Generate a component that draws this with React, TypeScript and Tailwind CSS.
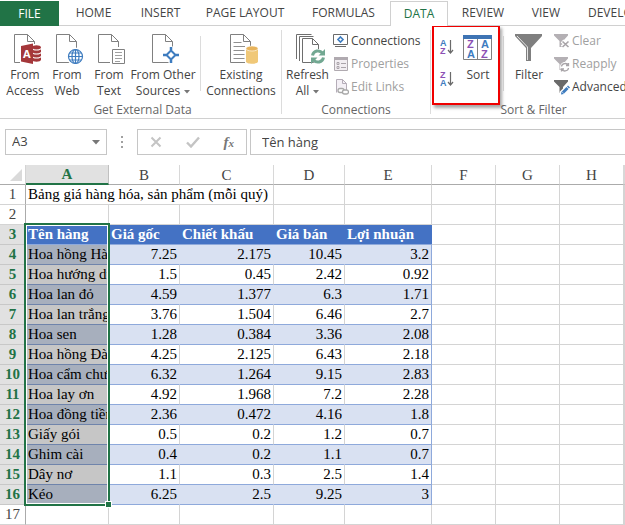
import type { ReactNode } from "react";

const tabs = [
  { label: "FILE", className: "w-[59px] bg-[#217346] text-white" },
  { label: "HOME", className: "w-[69px] text-[#444]" },
  { label: "INSERT", className: "w-[65px] text-[#444]" },
  { label: "PAGE LAYOUT", className: "w-[104px] text-[#444]" },
  { label: "FORMULAS", className: "w-[93px] text-[#444]" },
  { label: "DATA", className: "w-[58px] text-[#217346]" },
  { label: "REVIEW", className: "w-[70px] text-[#444]" },
  { label: "VIEW", className: "w-[56px] text-[#444]" },
  { label: "DEVELOPER", className: "w-[94px] text-[#444]" },
];

const columns = ["A", "B", "C", "D", "E", "F", "G", "H", "I"];

const headings = ["Tên hàng", "Giá gốc", "Chiết khấu", "Giá bán", "Lợi nhuận"];

const products = [
  ["Hoa hồng Hà Nội", "7.25", "2.175", "10.45", "3.2"],
  ["Hoa hướng dương", "1.5", "0.45", "2.42", "0.92"],
  ["Hoa lan đỏ", "4.59", "1.377", "6.3", "1.71"],
  ["Hoa lan trắng", "3.76", "1.504", "6.46", "2.7"],
  ["Hoa sen", "1.28", "0.384", "3.36", "2.08"],
  ["Hoa hồng Đà Lạt", "4.25", "2.125", "6.43", "2.18"],
  ["Hoa cẩm chướng", "6.32", "1.264", "9.15", "2.83"],
  ["Hoa lay ơn", "4.92", "1.968", "7.2", "2.28"],
  ["Hoa đồng tiền", "2.36", "0.472", "4.16", "1.8"],
  ["Giấy gói", "0.5", "0.2", "1.2", "0.7"],
  ["Ghim cài", "0.4", "0.2", "1.1", "0.7"],
  ["Dây nơ", "1.1", "0.3", "2.5", "1.4"],
  ["Kéo", "6.25", "2.5", "9.25", "3"],
];

/* Icons */

function PageIcon({ children }: { children?: ReactNode }) {
  return (
    <svg viewBox="0 0 32 32" className="size-8 overflow-visible" fill="none">
      <path d="M5.5 28.5V.5h13l7 7v21z" fill="#fff" stroke="#808080" />
      <path d="M18.5.5v7h7" stroke="#808080" />
      {children}
    </svg>
  );
}

function AccessIcon() {
  return (
    <PageIcon>
      <path d="M11 10h22v20H11z" fill="#fff" />
      <path d="M23 13.500c0-3 9-3 9 0v12c0 3-9 3-9 0z" fill="#a4373a" />
      <path
        d="M23 14.500c1 2 8 2 9 0M23 18.500c1 2 8 2 9 0M23 22.500c1 2 8 2 9 0"
        stroke="#fff"
        strokeWidth="1.200"
      />
      <path d="M12 12l12-2.500v20.500l-12-2.500z" fill="#a4373a" />
      <text x="14" y="24" fontSize="11" fontWeight="700" fill="#fff" className="font-['Open_Sans',sans-serif]">
        A
      </text>
    </PageIcon>
  );
}

function WebIcon() {
  return (
    <PageIcon>
      <circle cx="24.5" cy="22.500" r="9" fill="#fff" />
      <g stroke="#3e7cbf" strokeWidth="1.200">
        <circle cx="24.5" cy="22.500" r="7" fill="#fff" />
        <ellipse cx="24.5" cy="22.500" rx="3.500" ry="7" />
        <path d="M24.5 15.500v14M17.500 22.500h14M18.500 19h12M18.500 26h12" />
      </g>
    </PageIcon>
  );
}

function TextIcon() {
  return (
    <PageIcon>
      <path d="M17 13h16v18H17z" fill="#fff" />
      <path d="M19.500 15.500h12v14h-12z" fill="#fff" stroke="#808080" />
      <path d="M22 18.500h7M22 21.500h7M22 24.500h7M22 27.500h5" stroke="#a0a0a0" />
    </PageIcon>
  );
}

function OtherSourcesIcon() {
  return (
    <PageIcon>
      <path d="M24 11l10 10-10 10-10-10z" fill="#fff" />
      <path d="M24 16.500l4.500 4.500-4.500 4.500-4.500-4.500z" fill="#fff" stroke="#3e7cbf" strokeWidth="2" />
      <path d="M24 13v3M24 26v3M16 21h3.500M28.500 21H32" stroke="#3e7cbf" strokeWidth="2.500" />
    </PageIcon>
  );
}

function ExistingIcon() {
  return (
    <PageIcon>
      <path d="M8.500 8.500h8M8.500 12.500h14M8.500 16.500h11M8.500 20.500h11M8.500 24.500h11" stroke="#909090" />
      <path d="M20 12h14v18H20z" fill="#fff" />
      <path d="M21 14.500v13c0 3 12 3 12 0v-13z" fill="#f0c878" />
      <ellipse cx="27" cy="14.500" rx="6" ry="2.500" fill="#e8b45c" stroke="#fff" strokeWidth=".6" />
    </PageIcon>
  );
}

function RefreshIcon() {
  return (
    <svg viewBox="0 0 32 32" className="size-8 overflow-visible" fill="none">
      <g stroke="#6e6e6e">
        <path d="M4.500 25V.5h15M7.500 27V2.500h14" />
        <path d="M10.500 28.500v-24h10l6 6v18z" fill="#fff" />
        <path d="M20.500 4.500v6h6" />
      </g>
      <circle cx="26" cy="22.500" r="7.500" fill="#fff" />
      <g stroke="#72a892" strokeWidth="3">
        <path d="M20.500 21.500c1-5 7-6 10-2.500" />
        <path d="M31.500 23.500c-1 5-7 6-10 2.500" />
      </g>
      <path d="M33 15v6.500h-6.500zM19 30v-6.500h6.500z" fill="#72a892" />
    </svg>
  );
}

function ConnectionsIcon() {
  return (
    <svg viewBox="0 0 16 16" className="size-4" fill="none">
      <path d="M.5 1.500h14v10H.5z" fill="#fff" stroke="#6a6a6a" />
      <path d="M2 13.500h11" stroke="#6a6a6a" />
      <path d="M7.500 4L10 6.500 7.500 9 5 6.500z" stroke="#3e7cbf" strokeWidth="1.600" />
    </svg>
  );
}

function PropertiesIcon() {
  return (
    <svg viewBox="0 0 16 16" className="size-4" fill="none">
      <path d="M1.500 1.500h13v13h-13z" fill="#f2eef2" stroke="#b0aab0" />
      <path d="M1 1h14v3H1z" fill="#b0aab0" />
      <path d="M4 6.500h2v2H4zM4 10.500h2v2H4zM8 7.500h5M8 11.500h5" stroke="#aaa4aa" />
    </svg>
  );
}

function EditLinksIcon() {
  return (
    <svg viewBox="0 0 16 16" className="size-4" fill="none">
      <path d="M3.500 13.500V.5h6l4 4v9" fill="#f4f0f6" stroke="#b5adb8" />
      <path d="M9.500.5v4h4" stroke="#b5adb8" />
      <g stroke="#a8a8a8" strokeWidth="1.300" fill="#fff">
        <rect x="5" y="9.500" width="6" height="4" rx="2" />
        <rect x="9.500" y="11" width="6" height="4" rx="2" />
      </g>
    </svg>
  );
}

function SortOrderIcon({ top, bottom }: { top: string; bottom: string }) {
  const color = (letter: string) => (letter === "A" ? "#3e7cbf" : "#8c50b4");
  return (
    <svg viewBox="0 0 14 16" className="h-4 w-[14px] overflow-visible" fill="none">
      <g fontSize="9" fontWeight="700" className="font-['Liberation_Sans',sans-serif]">
        <text x="0" y="7" fill={color(top)}>{top}</text>
        <text x="0" y="15" fill={color(bottom)}>{bottom}</text>
      </g>
      <path d="M10.500 1v13M8 11l2.500 3 2.500-3" stroke="#6a6a6a" strokeWidth="1.200" />
    </svg>
  );
}

function SortIcon() {
  return (
    <svg viewBox="0 0 30 32" className="h-8 w-[30px]" fill="none">
      <path d="M.5 1.500h28v24H.5z" fill="#fff" stroke="#808080" />
      <path d="M14.500 5v20" stroke="#808080" />
      <path d="M0 1h29v4H0z" fill="#3e74b4" />
      <g fontSize="11" fontWeight="700" className="font-['Liberation_Sans',sans-serif]">
        <text x="4" y="14" fill="#8c50b4">Z</text>
        <text x="4" y="24" fill="#3e7cbf">A</text>
        <text x="18" y="14" fill="#3e7cbf">A</text>
        <text x="18" y="24" fill="#8c50b4">Z</text>
      </g>
    </svg>
  );
}

function FilterIcon() {
  return (
    <svg viewBox="0 0 32 32" className="size-8" fill="none">
      <path d="M2 0h27v2L18 14v13h-5V14L2 2z" fill="#7f7f7f" />
      <path d="M4 2l10.500 11v13" stroke="#e4e4e4" />
    </svg>
  );
}

function SmallFilterIcon({ muted, children }: { muted?: boolean; children: ReactNode }) {
  return (
    <svg viewBox="0 0 16 16" className="size-4" fill="none">
      <path d="M0 1h14v1.500L9 8v6H5.500V8L0 2.500z" fill={muted ? "#b4b0b4" : "#6a6a6a"} />
      {children}
    </svg>
  );
}

function Caret() {
  return (
    <svg viewBox="0 0 6 4" className="ml-1 inline h-1 w-[6px] align-middle">
      <path d="M0 0h6L3 3.500z" fill="#777" />
    </svg>
  );
}

/* Ribbon parts */

function Group({ label, className, children }: { label: string; className: string; children: ReactNode }) {
  return (
    <section aria-label={label} className={`flex shrink-0 flex-col ${className}`}>
      <div className="flex h-[76px] items-start">{children}</div>
      <div className="text-center leading-4 text-[#666]">{label}</div>
    </section>
  );
}

function BigButton({ icon, className, children }: { icon: ReactNode; className: string; children: ReactNode }) {
  return (
    <button className={`flex shrink-0 flex-col items-center gap-px pt-2 leading-4 whitespace-nowrap ${className}`}>
      {icon}
      <span>{children}</span>
    </button>
  );
}

function SmallButton({ icon, disabled, children }: { icon: ReactNode; disabled?: boolean; children: ReactNode }) {
  return (
    <button disabled={disabled} className="flex h-[23px] items-center gap-[2px] whitespace-nowrap disabled:text-[#a0a0a0]">
      {icon}
      {children}
    </button>
  );
}

function Divider({ tall }: { tall?: boolean }) {
  return tall ? (
    <div className="mt-1 mb-1 w-px shrink-0 bg-[#dcdcdc]" />
  ) : (
    <div className="mt-[10px] h-[55px] w-px shrink-0 bg-[#dcdcdc]" />
  );
}

function Ribbon() {
  return (
    <div className="flex overflow-hidden border-b border-[#d0d0d0]">
      <Group label="Get External Data" className="w-[281px] pl-1">
        <BigButton icon={<AccessIcon />} className="w-[42px]">From<br />Access</BigButton>
        <BigButton icon={<WebIcon />} className="w-[42px]">From<br />Web</BigButton>
        <BigButton icon={<TextIcon />} className="w-[42px]">From<br />Text</BigButton>
        <BigButton icon={<OtherSourcesIcon />} className="w-[66px]">From Other<br />Sources<Caret /></BigButton>
        <div className="w-1" />
        <Divider />
        <BigButton icon={<ExistingIcon />} className="w-[80px]">Existing<br />Connections</BigButton>
      </Group>
      <Divider tall />
      <Group label="Connections" className="w-[148px]">
        <BigButton icon={<RefreshIcon />} className="w-[51px]">Refresh<br />All<Caret /></BigButton>
        <div className="flex flex-col pt-[3px]">
          <SmallButton icon={<ConnectionsIcon />}>Connections</SmallButton>
          <SmallButton icon={<PropertiesIcon />} disabled>Properties</SmallButton>
          <SmallButton icon={<EditLinksIcon />} disabled>Edit Links</SmallButton>
        </div>
      </Group>
      <Divider tall />
      <Group label="Sort &amp; Filter" className="w-[205px]">
        <div className="relative flex h-full w-[72px] shrink-0">
          <div className="flex w-[30px] flex-col items-end gap-4 pt-[13px] pr-[7px]">
            <button aria-label="Sort A to Z"><SortOrderIcon top="A" bottom="Z" /></button>
            <button aria-label="Sort Z to A"><SortOrderIcon top="Z" bottom="A" /></button>
          </div>
          <BigButton icon={<SortIcon />} className="w-[34px]">Sort</BigButton>
          {/* highlight frame around the sort buttons */}
          <div className="pointer-events-none absolute -top-px left-px h-20 w-[68px] border-2 border-[#f00000] shadow-[2px_3px_3px_rgba(0,0,0,0.35)]" />
        </div>
        <Divider />
        <BigButton icon={<FilterIcon />} className="w-[50px]">Filter</BigButton>
        <div className="flex flex-col pt-[3px]">
          <SmallButton
            disabled
            icon={
              <SmallFilterIcon muted>
                <path d="M8 8l7 6M15 8l-7 6" stroke="#fff" strokeWidth="4" />
                <path d="M8.500 8.500l6 5.500M14.500 8.500l-6 5.500" stroke="#a8a4a8" strokeWidth="1.600" />
              </SmallFilterIcon>
            }
          >
            Clear
          </SmallButton>
          <SmallButton
            disabled
            icon={
              <SmallFilterIcon muted>
                <circle cx="11" cy="11" r="5" fill="#fff" />
                <path d="M7.500 10.500c.5-3.500 5.500-4 7-1M14.500 7v2.500H12M14.500 12c-.5 3.500-5.500 4-7 1M7.500 15.500V13H10" stroke="#a8a4a8" strokeWidth="1.300" />
              </SmallFilterIcon>
            }
          >
            Reapply
          </SmallButton>
          <SmallButton
            icon={
              <SmallFilterIcon>
                <path d="M7 15l8-8" stroke="#fff" strokeWidth="5" />
                <path d="M9 13.500l4.500-4.500" stroke="#3e7cbf" strokeWidth="3" />
                <path d="M7 15.500l.5-3 2.500 2.500zM13 7.500l1-1 2 2-1 1z" fill="#3e7cbf" />
              </SmallFilterIcon>
            }
          >
            Advanced
          </SmallButton>
        </div>
      </Group>
    </div>
  );
}

function FormulaBar() {
  return (
    <div className="flex py-[10px] pl-[5px] text-[13px] text-[#444]">
      <div className="flex h-[26px] w-[102px] shrink-0 items-center border border-[#c6c6c6]">
        <input aria-label="Name box" defaultValue="A3" className="w-full min-w-0 pl-[6px] outline-none" />
        <button aria-label="Named ranges" className="px-[6px]">
          <svg viewBox="0 0 8 5" className="h-[5px] w-2"><path d="M0 0h8L4 4.500z" fill="#777" /></svg>
        </button>
      </div>
      <div className="flex w-[30px] shrink-0 flex-col items-center justify-center gap-[3px]">
        <i className="size-[2px] bg-[#a0a0a0]" />
        <i className="size-[2px] bg-[#a0a0a0]" />
        <i className="size-[2px] bg-[#a0a0a0]" />
      </div>
      <div className="flex h-[26px] w-[110px] shrink-0 items-center justify-around border border-[#c6c6c6]">
        <button aria-label="Cancel">
          <svg viewBox="0 0 12 12" className="size-3" fill="none"><path d="M1.500 1.500l9 9M10.500 1.500l-9 9" stroke="#c4c4c4" strokeWidth="2" /></svg>
        </button>
        <button aria-label="Enter">
          <svg viewBox="0 0 14 12" className="h-3 w-[14px]" fill="none"><path d="M1 6.500l4 4 8-9" stroke="#c4c4c4" strokeWidth="2.400" /></svg>
        </button>
        <button aria-label="Insert function" className="font-['Liberation_Serif',serif] text-[15px] leading-5 font-bold text-[#777] italic">
          f<span className="text-[11px]">x</span>
        </button>
      </div>
      <input
        aria-label="Formula"
        defaultValue="Tên hàng"
        className="ml-[3px] h-[26px] min-w-0 flex-1 border border-r-0 border-[#c6c6c6] pl-[11px] outline-none"
      />
    </div>
  );
}

/* Sheet */

function RowHead({ n }: { n: number }) {
  const selected = n >= 3 && n <= 16;
  return (
    <th
      scope="row"
      className={`border-r border-b p-0 text-center ${
        selected
          ? "border-r-[#217346] border-b-[#c8c8c8] bg-[#e1e1e1] font-bold text-[#217346]"
          : "border-r-[#ababab] border-b-[#d4d4d4] font-normal text-[#444]"
      }`}
    >
      {n}
    </th>
  );
}

function EmptyCells({ count }: { count: number }) {
  return Array.from({ length: count }, (_, i) => (
    <td key={i} className="border-r border-b border-[#d4d4d4]" />
  ));
}

function Sheet() {
  return (
    <div className="relative">
      <table className="w-full table-fixed border-separate border-spacing-0 font-['Liberation_Serif',serif] text-[15px] leading-[19px] text-black">
        <colgroup>
          <col className="w-[26px]" />
          <col className="w-[83px]" />
          <col className="w-[71px]" />
          <col className="w-[94px]" />
          <col className="w-[71px]" />
          <col className="w-[87px]" />
          <col className="w-[64px]" />
          <col className="w-[64px]" />
          <col className="w-[64px]" />
          <col />
        </colgroup>
        <thead>
          <tr className="h-5 leading-[18px]">
            <td className="border-r border-b border-r-[#d4d4d4] border-b-[#ababab] p-0">
              <svg viewBox="0 0 12 12" className="mr-[3px] ml-auto size-3"><path d="M12 0v12H0z" fill="#dadada" /></svg>
            </td>
            {columns.map((c) => (
              <th
                key={c}
                scope="col"
                className={`overflow-hidden border-r p-0 text-center ${
                  c === "A"
                    ? "border-b-2 border-r-[#c0c0c0] border-b-[#217346] bg-[#e1e1e1] font-bold text-[#217346]"
                    : "border-b border-r-[#d8d8d8] border-b-[#ababab] font-normal text-[#444]"
                }`}
              >
                {c === "I" ? "" : c}
              </th>
            ))}
          </tr>
        </thead>
        <tbody>
          <tr className="h-5">
            <RowHead n={1} />
            <td colSpan={3} className="border-r border-b border-[#d4d4d4] p-0 pl-[2px] whitespace-nowrap">
              Bảng giá hàng hóa, sản phẩm (mỗi quý)
            </td>
            <EmptyCells count={6} />
          </tr>
          <tr className="h-5">
            <RowHead n={2} />
            <EmptyCells count={9} />
          </tr>
          <tr className="h-5">
            <RowHead n={3} />
            {headings.map((h) => (
              <td key={h} className="border-b border-[#8ea9db] bg-[#4472c4] p-0 pl-[2px] font-bold whitespace-nowrap text-white">
                {h}
              </td>
            ))}
            <EmptyCells count={4} />
          </tr>
          {products.map(([name, ...values], i) => {
            const banded = i % 2 === 0;
            return (
              <tr key={name} className="h-5">
                <RowHead n={i + 4} />
                <td
                  className={`overflow-hidden border-b border-[#6f84ab] p-0 pl-[2px] whitespace-nowrap ${
                    banded ? "bg-[#a7afbd]" : "bg-[#c6c6c6]"
                  }`}
                >
                  {name}
                </td>
                {values.map((v, j) => (
                  <td
                    key={j}
                    className={`border-r border-b border-b-[#8ea9db] p-0 pr-[2px] text-right ${
                      banded ? "bg-[#d9e1f2]" : "bg-white"
                    } ${j === 3 ? "border-r-[#8ea9db]" : banded ? "border-r-[#d9e1f2]" : "border-r-[#d4d4d4]"}`}
                  >
                    {v}
                  </td>
                ))}
                <EmptyCells count={4} />
              </tr>
            );
          })}
          <tr className="h-5">
            <RowHead n={17} />
            <EmptyCells count={9} />
          </tr>
        </tbody>
      </table>

      {/* selection A3:A16 with its fill handle */}
      <div className="pointer-events-none absolute top-[58px] left-6 h-[283px] w-[86px] border-2 border-[#217346]">
        <div className="h-full border border-white" />
        <div className="absolute -right-[4px] -bottom-[4px] size-[7px] border border-white bg-[#217346]" />
      </div>
    </div>
  );
}

export default function App() {
  return (
    <main className="overflow-hidden bg-white font-['Open_Sans',sans-serif] text-xs text-[#444]">
      <nav className="flex pt-px">
        {tabs.map(({ label, className }) => (
          <button
            key={label}
            className={`h-[25px] shrink-0 whitespace-nowrap ${className} ${
              label === "DATA"
                ? "border border-b-0 border-[#d0d0d0]"
                : label === "FILE"
                  ? ""
                  : "border-b border-[#d0d0d0]"
            }`}
          >
            {label}
          </button>
        ))}
        <div className="flex-1 border-b border-[#d0d0d0]" />
      </nav>
      <Ribbon />
      <FormulaBar />
      <Sheet />
    </main>
  );
}
